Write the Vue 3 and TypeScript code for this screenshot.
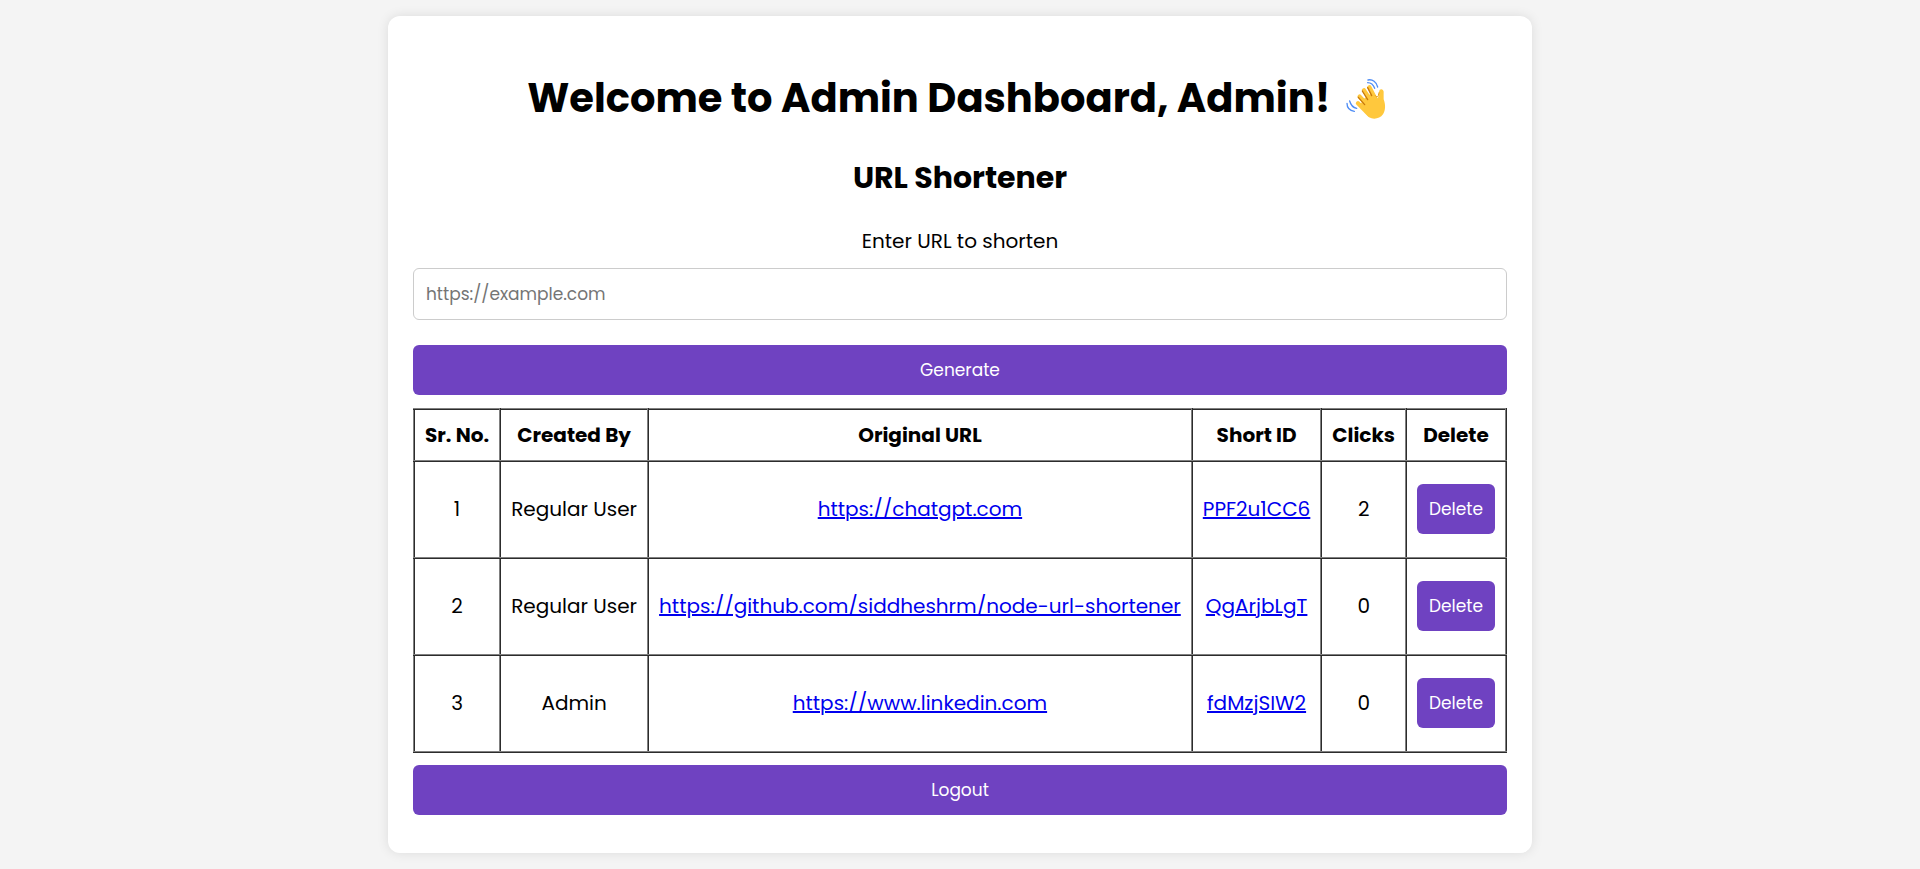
<script setup lang="ts">
import { ref } from 'vue'

interface ShortUrl {
  id: number
  createdBy: string
  originalUrl: string
  shortId: string
  clicks: number
}

const newUrl = ref('')

const urls = ref<ShortUrl[]>([
  { id: 1, createdBy: 'Regular User', originalUrl: 'https://chatgpt.com', shortId: 'PPF2u1CC6', clicks: 2 },
  { id: 2, createdBy: 'Regular User', originalUrl: 'https://github.com/siddheshrm/node-url-shortener', shortId: 'QgArjbLgT', clicks: 0 },
  { id: 3, createdBy: 'Admin', originalUrl: 'https://www.linkedin.com', shortId: 'fdMzjSIW2', clicks: 0 },
])

function removeUrl(id: number) {
  urls.value = urls.value.filter((url) => url.id !== id)
}
</script>

<template>
  <main class="card">
    <h1 class="title">
      Welcome to Admin Dashboard, Admin!
      <svg class="wave" viewBox="0 0 54 42" role="img" aria-label="Waving hand">
        <g transform="translate(-9 -17) scale(0.3333)" fill="none" stroke-linecap="round" stroke-linejoin="round">
          <g stroke="#4f8df5" stroke-width="4">
            <path d="M114 57c13-3 26 6 29 21" />
            <path d="M113 65c10 0 17 6 21 17" />
            <path d="M51 127c0 12 8 22 22 24" />
            <path d="M59 120c3 11 10 20 21 22" />
          </g>
          <g stroke="#ffc83d" stroke-width="13">
            <path d="M84 127l34 34" />
            <path d="M89 107l36 38" />
            <path d="M102 88l28 42" />
            <path d="M118 79l20 38" />
            <path d="M154 91l-2 36" />
          </g>
          <path fill="#ffc83d" d="M88 135l14-22 18-13 14 8c4 6 8 6 11 0l3-15 12-2 1 24c6 16 6 34-2 45-9 13-28 17-42 9z" />
          <g stroke="#c8790c" stroke-width="4">
            <path d="M85 109l19 22" />
            <path d="M97 90l16 26" />
            <path d="M113 80l12 24" />
            <path d="M136 104c3 5 7 5 9 0l2-9" stroke="#e09a1b" stroke-width="3" />
          </g>
        </g>
      </svg>
    </h1>
    <h2 class="subtitle">URL Shortener</h2>

    <form class="form" @submit.prevent>
      <label class="label" for="url">Enter URL to shorten</label>
      <input id="url" v-model="newUrl" class="field" type="text" placeholder="https://example.com" />
      <button class="button wide" type="submit">Generate</button>
    </form>

    <table class="urls">
      <thead>
        <tr>
          <th>Sr. No.</th>
          <th>Created By</th>
          <th>Original URL</th>
          <th>Short ID</th>
          <th>Clicks</th>
          <th>Delete</th>
        </tr>
      </thead>
      <tbody>
        <tr v-for="(url, index) in urls" :key="url.id">
          <td>{{ index + 1 }}</td>
          <td>{{ url.createdBy }}</td>
          <td><a :href="url.originalUrl">{{ url.originalUrl }}</a></td>
          <td><a :href="'/' + url.shortId">{{ url.shortId }}</a></td>
          <td>{{ url.clicks }}</td>
          <td><button class="button row-button" type="button" @click="removeUrl(url.id)">Delete</button></td>
        </tr>
      </tbody>
    </table>

    <button class="button wide" type="button">Logout</button>
  </main>
</template>

<style>
body {
  background: #f4f4f4;
}
</style>

<style scoped>
.card {
  box-sizing: border-box;
  width: fit-content;
  max-width: 100%;
  margin: 16px auto;
  padding: 52px 25px 38px;
  border-radius: 12px;
  background: #fff;
  box-shadow: 0 0 12px rgba(0, 0, 0, 0.1);
  color: #000;
  font-family: Poppins, Inter, "Open Sans", sans-serif;
  font-size: 20px;
  line-height: 30px;
  text-align: center;
}

.title {
  margin: 0 0 27px;
  font-size: 40px;
  line-height: 60px;
}

.wave {
  width: 54px;
  height: 42px;
  vertical-align: -8px;
}

.subtitle {
  margin: 0 0 26px;
  font-size: 30px;
  line-height: 45px;
}

.form {
  display: flex;
  flex-direction: column;
  margin-bottom: 13px;
}

.label {
  margin-bottom: 12px;
}

.field {
  box-sizing: border-box;
  width: 100%;
  height: 52px;
  margin: 0 0 25px;
  padding: 12px;
  border: 1px solid #ccc;
  border-radius: 6px;
  background: #fff;
  font-family: inherit;
  font-size: 17px;
}

.field::placeholder {
  color: #757575;
}

.button {
  height: 50px;
  padding: 0 12px;
  border: 0;
  border-radius: 6px;
  background: #6f42c1;
  color: #fff;
  font-family: inherit;
  font-size: 17px;
  cursor: pointer;
}

.wide {
  display: block;
  width: 100%;
}

.row-button {
  display: block;
  margin: 13px auto 12px;
}

.urls {
  width: 100%;
  margin-bottom: 12px;
  border: 2px ridge #808080;
  border-collapse: collapse;
}

.urls th,
.urls td {
  padding: 10px;
  border: 2px ridge #808080;
}

.urls td {
  padding: 9px 10px 11px;
}

.urls a {
  color: #0000ee;
}
</style>
